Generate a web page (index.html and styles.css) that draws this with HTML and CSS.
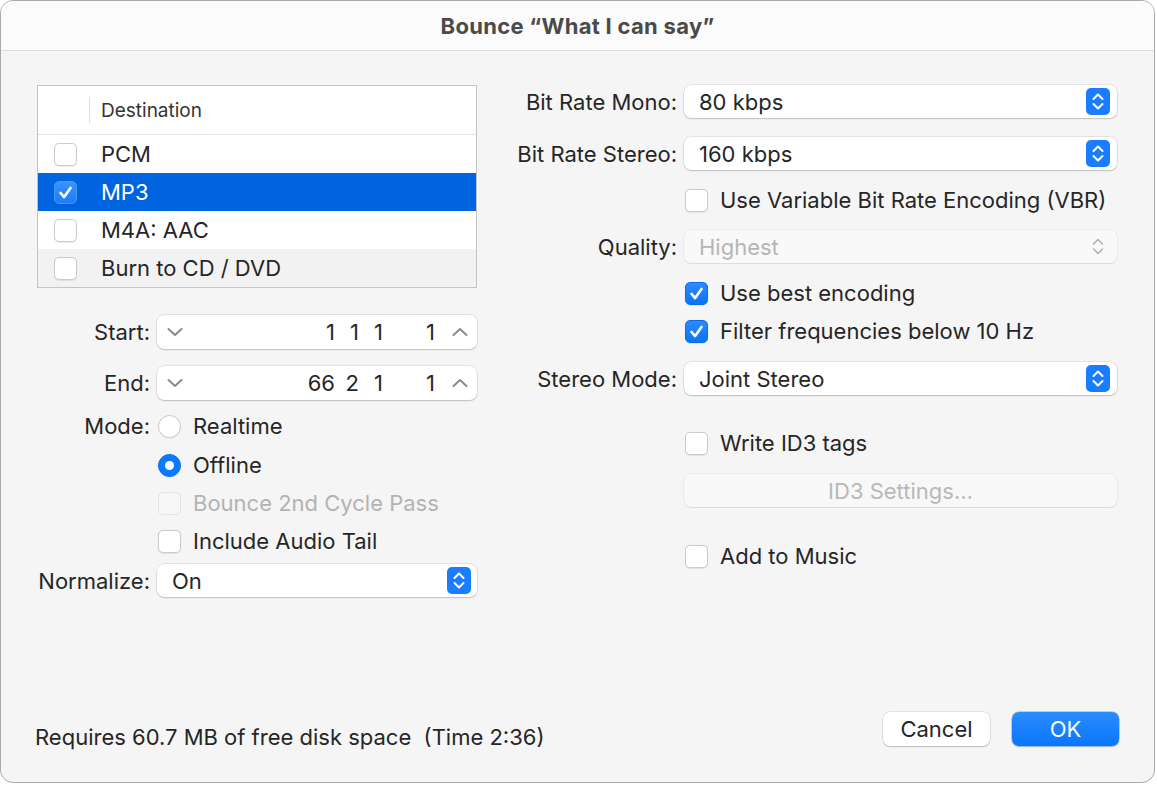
FILE: index.html
```html
<!DOCTYPE html>
<html lang="en">
<head>
  <meta charset="UTF-8">
  <title>Bounce</title>
  <link rel="stylesheet" href="styles.css">
</head>
<body>

  <div class="window">
    <header class="titlebar">Bounce “What I can say”</header>

    <main class="content">
      <!-- Left column: destinations + range -->
      <section class="col col-left">
        <div class="dest-table">
          <div class="dest-head">
            <span class="head-sep"></span>
            <span class="head-label">Destination</span>
          </div>
          <div class="dest-row">
            <span class="check"></span><span class="dest-name">PCM</span>
          </div>
          <div class="dest-row selected">
            <span class="check on"><svg viewBox="0 0 23 23"><path d="M6 12 L10 16.5 L17 6.5"/></svg></span><span class="dest-name">MP3</span>
          </div>
          <div class="dest-row">
            <span class="check"></span><span class="dest-name">M4A: AAC</span>
          </div>
          <div class="dest-row alt">
            <span class="check"></span><span class="dest-name">Burn to CD / DVD</span>
          </div>
        </div>

        <div class="row row-start">
          <label>Start:</label>
          <div class="stepper">
            <svg class="chev" viewBox="0 0 16 10"><path d="M1.5 2 L8 8 L14.5 2"/></svg>
            <div class="vals">
              <span class="seg">1</span><span class="seg s2">1</span><span class="seg s3">1</span><span class="seg s4">1</span>
            </div>
            <svg class="chev up" viewBox="0 0 16 10"><path d="M1.5 8 L8 2 L14.5 8"/></svg>
          </div>
        </div>

        <div class="row row-end">
          <label>End:</label>
          <div class="stepper">
            <svg class="chev" viewBox="0 0 16 10"><path d="M1.5 2 L8 8 L14.5 2"/></svg>
            <div class="vals">
              <span class="seg">66</span><span class="seg s2">2</span><span class="seg s3">1</span><span class="seg s4">1</span>
            </div>
            <svg class="chev up" viewBox="0 0 16 10"><path d="M1.5 8 L8 2 L14.5 8"/></svg>
          </div>
        </div>

        <div class="row row-mode">
          <label>Mode:</label>
          <div class="opt"><span class="radio"></span>Realtime</div>
        </div>
        <div class="row row-tight">
          <span></span>
          <div class="opt"><span class="radio on"></span>Offline</div>
        </div>
        <div class="row row-tight">
          <span></span>
          <div class="opt disabled"><span class="check"></span>Bounce 2nd Cycle Pass</div>
        </div>
        <div class="row row-tight">
          <span></span>
          <div class="opt"><span class="check"></span>Include Audio Tail</div>
        </div>

        <div class="row row-norm">
          <label>Normalize:</label>
          <div class="popup">
            <span class="popup-text">On</span>
            <svg class="popup-arrows" viewBox="0 0 24 27"><rect width="24" height="27" rx="5"/><path d="M7.5 11 L12 6.5 L16.5 11 M7.5 16 L12 20.5 L16.5 16"/></svg>
          </div>
        </div>
      </section>

      <!-- Right column: MP3 settings -->
      <section class="col col-right">
        <div class="row">
          <label>Bit Rate Mono:</label>
          <div class="popup">
            <span class="popup-text">80 kbps</span>
            <svg class="popup-arrows" viewBox="0 0 24 27"><rect width="24" height="27" rx="5"/><path d="M7.5 11 L12 6.5 L16.5 11 M7.5 16 L12 20.5 L16.5 16"/></svg>
          </div>
        </div>
        <div class="row mt-19">
          <label>Bit Rate Stereo:</label>
          <div class="popup">
            <span class="popup-text">160 kbps</span>
            <svg class="popup-arrows" viewBox="0 0 24 27"><rect width="24" height="27" rx="5"/><path d="M7.5 11 L12 6.5 L16.5 11 M7.5 16 L12 20.5 L16.5 16"/></svg>
          </div>
        </div>
        <div class="row mt-18">
          <span></span>
          <div class="opt"><span class="check"></span>Use Variable Bit Rate Encoding (VBR)</div>
        </div>
        <div class="row mt-18">
          <label>Quality:</label>
          <div class="popup disabled">
            <span class="popup-text">Highest</span>
            <svg class="popup-arrows" viewBox="0 0 24 27"><path d="M7.5 11 L12 6.5 L16.5 11 M7.5 16 L12 20.5 L16.5 16"/></svg>
          </div>
        </div>
        <div class="row mt-18">
          <span></span>
          <div class="opt"><span class="check on"><svg viewBox="0 0 23 23"><path d="M6 12 L10 16.5 L17 6.5"/></svg></span>Use best encoding</div>
        </div>
        <div class="row mt-14">
          <span></span>
          <div class="opt"><span class="check on"><svg viewBox="0 0 23 23"><path d="M6 12 L10 16.5 L17 6.5"/></svg></span>Filter frequencies below 10 Hz</div>
        </div>
        <div class="row mt-19">
          <label>Stereo Mode:</label>
          <div class="popup">
            <span class="popup-text">Joint Stereo</span>
            <svg class="popup-arrows" viewBox="0 0 24 27"><rect width="24" height="27" rx="5"/><path d="M7.5 11 L12 6.5 L16.5 11 M7.5 16 L12 20.5 L16.5 16"/></svg>
          </div>
        </div>
        <div class="row mt-36">
          <span></span>
          <div class="opt"><span class="check"></span>Write ID3 tags</div>
        </div>
        <div class="row mt-19">
          <span></span>
          <button class="btn wide" disabled>ID3 Settings…</button>
        </div>
        <div class="row mt-37">
          <span></span>
          <div class="opt"><span class="check"></span>Add to Music</div>
        </div>
      </section>
    </main>

    <footer class="footer">
      <span class="disk-info">Requires 60.7 MB of free disk space&nbsp; (Time 2:36)</span>
      <div class="actions">
        <button class="btn">Cancel</button>
        <button class="btn primary">OK</button>
      </div>
    </footer>
  </div>

</body>
</html>
```

FILE: styles.css
```css
body {
  margin: 0;
  background: #fff;
  font-family: Inter, "Liberation Sans", sans-serif;
  color: #262626;
}

.window {
  width: 1155px;
  height: 783px;
  box-sizing: border-box;
  border: 1px solid #a9a9a9;
  border-radius: 13px;
  background: #f5f5f5;
  overflow: hidden;
  display: flex;
  flex-direction: column;
}

.titlebar {
  height: 49px;
  flex: none;
  background: #fbfbfb;
  border-bottom: 1px solid #dcdcdc;
  display: flex;
  align-items: center;
  justify-content: center;
  font-size: 22px;
  font-weight: 700;
  letter-spacing: 0.3px;
  color: #4a4a4a;
}

.content {
  flex: 1;
  display: flex;
  gap: 23px;
  padding: 34px 0 0 36px;
}

.col {
  display: flex;
  flex-direction: column;
}

.col-left {
  width: 440px;
  --label-w: 113px;
}

.col-right {
  width: 617px;
  --label-w: 177px;
}

/* generic label + control row */
.row {
  display: grid;
  grid-template-columns: var(--label-w) 1fr;
  column-gap: 7px;
  align-items: center;
  font-size: 22px;
}

.row label {
  text-align: right;
  white-space: nowrap;
}

.mt-14 { margin-top: 14px; }
.mt-18 { margin-top: 18px; }
.mt-19 { margin-top: 19px; }
.mt-36 { margin-top: 36px; }
.mt-37 { margin-top: 37px; }

.row-start { margin-top: 27px; }
.row-end { margin-top: 17px; }
.row-mode { margin-top: 13px; }
.row-tight { margin-top: 14px; }
.row-norm { margin-top: 11px; }

/* destination table */
.dest-table {
  border: 1px solid #c4c4c4;
  background: #fff;
}

.dest-head {
  height: 48px;
  border-bottom: 1px solid #e2e2e2;
  display: flex;
  align-items: center;
  font-size: 19px;
  color: #333;
}

.head-sep {
  width: 1px;
  height: 26px;
  background: #dedede;
  margin-left: 51px;
  margin-right: 11px;
}

.dest-row {
  height: 38px;
  display: flex;
  align-items: center;
  padding-left: 16px;
  font-size: 22px;
}

.dest-row .check {
  margin-right: 24px;
}

.dest-row.selected {
  background: #0064e1;
  color: #fff;
}

.dest-row.alt {
  background: #f2f2f2;
}

/* checkbox / radio */
.check,
.radio {
  width: 23px;
  height: 23px;
  flex: none;
  box-sizing: border-box;
  background: #fff;
  border: 1px solid #cbcbcb;
  box-shadow: 0 0.5px 1px rgba(0, 0, 0, 0.08);
  display: inline-flex;
  align-items: center;
  justify-content: center;
}

.check {
  border-radius: 5px;
}

.check.on {
  background: linear-gradient(#2b8bff, #0b74f5);
  border-color: #0a6de6;
}

.dest-row.selected .check.on {
  background: linear-gradient(#3a93ff, #1a7dfa);
  border-color: #4a98f2;
}

.check svg {
  width: 23px;
  height: 23px;
}

.check svg path {
  fill: none;
  stroke: #fff;
  stroke-width: 2.8;
  stroke-linecap: round;
  stroke-linejoin: round;
}

.radio {
  border-radius: 50%;
}

.radio.on {
  background: #0a7aff;
  border-color: #0a70ec;
}

.radio.on::after {
  content: "";
  width: 9px;
  height: 9px;
  border-radius: 50%;
  background: #fff;
}

.opt {
  display: flex;
  align-items: center;
  gap: 12px;
  height: 24px;
  padding-left: 1px;
  white-space: nowrap;
}

.opt.disabled {
  color: #b3b3b3;
}

.opt.disabled .check {
  background: #f6f6f6;
  border-color: #e2e2e2;
  box-shadow: none;
}

/* stepper field (start / end) */
.stepper {
  height: 34px;
  display: flex;
  align-items: center;
  background: #fff;
  border-radius: 7px;
  box-shadow: 0 0 0 0.5px rgba(0, 0, 0, 0.14), 0 1px 1.5px rgba(0, 0, 0, 0.16);
  padding: 0 9px 0 10px;
}

.chev {
  width: 16px;
  height: 10px;
  flex: none;
}

.chev path {
  fill: none;
  stroke: #8a8a8a;
  stroke-width: 2;
  stroke-linecap: round;
  stroke-linejoin: round;
}

.vals {
  flex: 1;
  display: flex;
  justify-content: flex-end;
  margin-right: 17px;
}

.seg { text-align: right; }
.seg.s2, .seg.s3 { width: 24px; }
.seg.s4 { width: 52px; }

/* popup buttons */
.popup {
  height: 33px;
  display: flex;
  align-items: center;
  justify-content: space-between;
  background: #fff;
  border-radius: 7px;
  box-shadow: 0 0 0 0.5px rgba(0, 0, 0, 0.14), 0 1px 1.5px rgba(0, 0, 0, 0.16);
  padding: 0 7px 0 15px;
}

.popup-arrows {
  width: 24px;
  height: 27px;
  flex: none;
}

.popup-arrows rect {
  fill: #1a7dff;
}

.popup-arrows path {
  fill: none;
  stroke: #fff;
  stroke-width: 2;
  stroke-linecap: round;
  stroke-linejoin: round;
}

.col-left .popup {
  padding-right: 6px;
}

.popup.disabled {
  background: #f9f9f9;
  box-shadow: 0 0 0 0.5px rgba(0, 0, 0, 0.07), 0 1px 1px rgba(0, 0, 0, 0.06);
  color: #b5b5b5;
}

.popup.disabled .popup-arrows path {
  stroke: #b0b0b0;
  stroke-width: 1.6;
}

/* push buttons */
.btn {
  height: 34px;
  font-family: inherit;
  font-size: 22px;
  color: #262626;
  background: #fff;
  border: none;
  border-radius: 7px;
  box-shadow: 0 0 0 0.5px rgba(0, 0, 0, 0.14), 0 1px 1.5px rgba(0, 0, 0, 0.18);
  padding: 0;
}

.btn.wide {
  height: 33px;
  width: 100%;
  background: #f8f8f8;
  color: #b8b8b8;
  box-shadow: 0 0 0 0.5px rgba(0, 0, 0, 0.07), 0 1px 1px rgba(0, 0, 0, 0.07);
}

.btn.primary {
  background: linear-gradient(#2a8cff, #0a76fb);
  color: #fff;
  box-shadow: 0 0 0 0.5px rgba(0, 90, 220, 0.5), 0 1px 1.5px rgba(0, 0, 0, 0.15);
}

.footer {
  display: flex;
  align-items: center;
  justify-content: space-between;
  padding: 0 35px 32px 34px;
  font-size: 22px;
}

.disk-info {
  margin-top: 16px;
}

.actions {
  display: flex;
  gap: 22px;
}

.actions .btn {
  width: 107px;
}
```
